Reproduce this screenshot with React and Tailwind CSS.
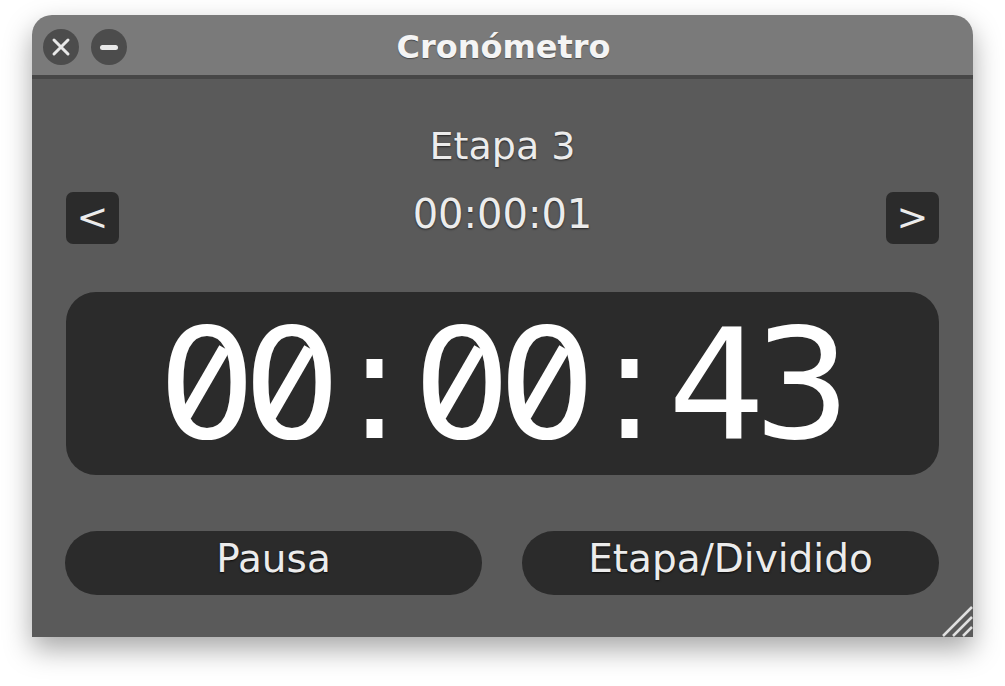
import React from 'react';

const sans = { fontFamily: '"DejaVu Sans", "Open Sans", sans-serif' };

const TitleButton = ({ kind }) => (
  <div className="w-[36px] h-[36px] rounded-full bg-[#4c4c4c] flex items-center justify-center">
    {kind === "close" ? (
      <svg width="20" height="20" viewBox="0 0 20 20">
        <path d="M3 3 L17 17 M17 3 L3 17" stroke="#e8e8e8" strokeWidth="3" strokeLinecap="round" />
      </svg>
    ) : (
      <div className="w-[18px] h-[5px] rounded-full bg-[#e8e8e8]" />
    )}
  </div>
);

const ArrowButton = ({ children }) => (
  <button className="w-[53px] h-[52px] rounded-[7px] bg-[#2b2b2b] text-[#ececec] text-[38px] leading-none flex items-center justify-center pb-[2px]">
    {children}
  </button>
);

const PillButton = ({ children }) => (
  <button className="flex-1 h-[64px] rounded-full bg-[#2b2b2b] text-[#ececec] text-[39px] leading-none flex items-center justify-center pb-[9px] [text-shadow:0_1px_2px_rgba(0,0,0,0.8)]">
    {children}
  </button>
);

// one fixed-width cell of the big clock; zeros get the slash like the mac mono font
const ClockChar = ({ ch }) => {
  if (ch === ":") {
    return (
      <div className="w-[85px] h-[160px] flex justify-center">
        <span>{ch}</span>
      </div>
    );
  }
  return (
    <div className="w-[85px] h-[160px] relative flex justify-start">
      <span className="ml-[-4px] tracking-[-13px]">{ch}</span>
      {ch === "0" && (
        <div className="absolute left-1/2 top-[74px] w-[12px] h-[78px] -translate-x-1/2 -translate-y-1/2 rotate-[30deg] bg-white" />
      )}
    </div>
  );
};

const App = () => {
  const clock = "00:00:43";

  return (
    <div className="w-[1005px] h-[686px] bg-white pl-[32px] pt-[15px]" style={sans}>
      <div className="w-[941px] h-[622px] rounded-t-[20px] overflow-hidden flex flex-col shadow-[0_12px_28px_rgba(0,0,0,0.35)]">

        {/* title bar */}
        <div className="h-[60px] bg-[#7a7a7a] flex items-center px-[11px] relative">
          <div className="flex gap-[12px] mt-[4px]">
            <TitleButton kind="close" />
            <TitleButton kind="min" />
          </div>
          <div className="absolute inset-0 flex items-center justify-center pl-[2px] pt-[4px] text-[32px] font-semibold text-[#f4f4f4] [text-shadow:0_1px_1px_rgba(0,0,0,0.4)]">
            Cronómetro
          </div>
        </div>
        <div className="h-[4px] bg-[#474747]" />

        {/* body */}
        <div className="flex-1 bg-[#5a5a5a] px-[34px] pt-[45px] flex flex-col relative">
          <div className="h-[44px] flex items-center justify-center text-[38px] text-[#ececec] [text-shadow:0_1px_2px_rgba(0,0,0,0.6)]">
            Etapa 3
          </div>

          <div className="mt-[24px] h-[52px] flex items-center justify-between">
            <ArrowButton>&lt;</ArrowButton>
            <div className="text-[40px] leading-none text-[#ececec] mb-[8px] [text-shadow:0_1px_2px_rgba(0,0,0,0.6)]">00:00:01</div>
            <ArrowButton>&gt;</ArrowButton>
          </div>

          <div className="mt-[48px] h-[183px] rounded-[30px] bg-[#2b2b2b] flex items-center justify-center">
            <div className="flex text-[154px] leading-none text-white mt-[8px] ml-[-1px]">
              {clock.split("").map((ch, i) => <ClockChar key={i} ch={ch} />)}
            </div>
          </div>

          <div className="mt-[56px] flex gap-[40px] ml-[-1px]">
            <PillButton>Pausa</PillButton>
            <PillButton>Etapa/Dividido</PillButton>
          </div>

          {/* resize grip */}
          <svg className="absolute right-0 bottom-0" width="32" height="32" viewBox="0 0 32 32">
            <path d="M2 31 L31 2 M12 31 L31 12 M22 31 L31 22" stroke="#e0e0e0" strokeWidth="2.5" />
          </svg>
        </div>
      </div>
    </div>
  );
};

export default App;
